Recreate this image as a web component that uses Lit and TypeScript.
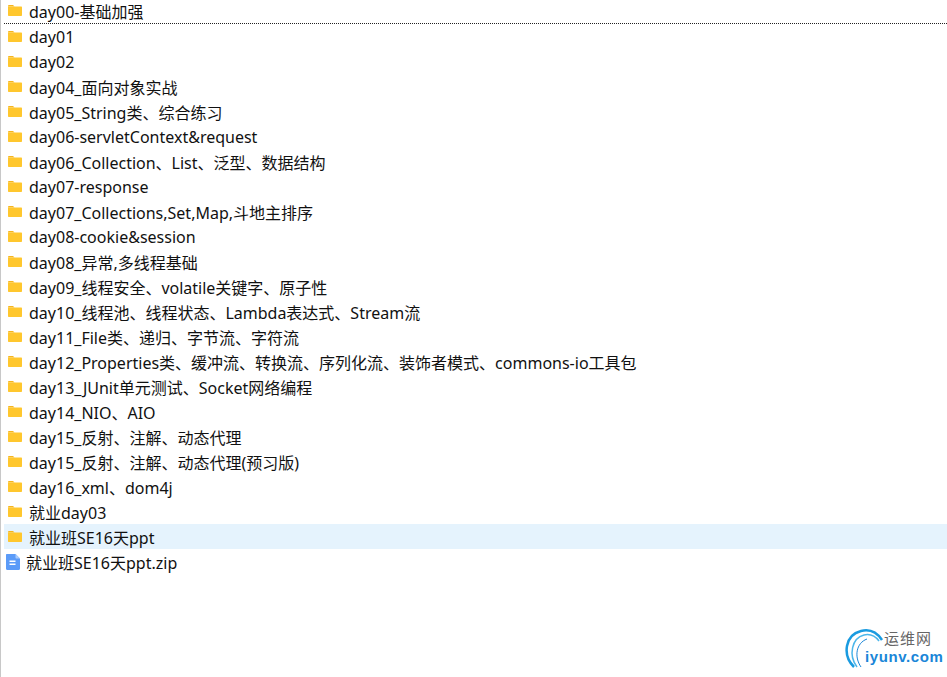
import { LitElement, html, css, svg } from "lit";
import { customElement } from "lit/decorators.js";

const NAMES = [
  "day00-基础加强","day01","day02","day04_面向对象实战","day05_String类、综合练习",
  "day06-servletContext&request","day06_Collection、List、泛型、数据结构","day07-response",
  "day07_Collections,Set,Map,斗地主排序","day08-cookie&session","day08_异常,多线程基础",
  "day09_线程安全、volatile关键字、原子性","day10_线程池、线程状态、Lambda表达式、Stream流",
  "day11_File类、递归、字节流、字符流","day12_Properties类、缓冲流、转换流、序列化流、装饰者模式、commons-io工具包",
  "day13_JUnit单元测试、Socket网络编程","day14_NIO、AIO","day15_反射、注解、动态代理",
  "day15_反射、注解、动态代理(预习版)","day16_xml、dom4j","就业day03","就业班SE16天ppt",
];

const folder = svg`<svg class="icon" width="16" height="16" viewBox="0 0 16 16">
  <path d="M1 3.2C1 2.5 1.5 2 2.2 2H6l1.6 1.6H1z" fill="#f5b51e"/>
  <path d="M1 3.5H14C14.6 3.5 15 3.9 15 4.500V12C15 12.6 14.600 13 14 13H2C1.400 13 1 12.600 1 12z" fill="#ffc72e"/>
</svg>`;

const file = svg`<svg class="icon" width="16" height="18" viewBox="0 0 16 18">
  <path d="M2 1H10.500L15 5.500V15.500C15 16.300 14.500 17 13.600 17H2.400C1.500 17 1 16.300 1 15.500V2C1 1.400 1.400 1 2 1z" fill="#5b9bf8"/>
  <path d="M10.500 1L15 5.500H11.500C10.900 5.500 10.500 5.100 10.500 4.500z" fill="#a9cbfb"/>
  <rect x="4.500" y="7.500" width="6" height="1.500" fill="#fff"/>
  <rect x="4.500" y="10.500" width="6" height="1.500" fill="#fff"/>
</svg>`;

@customElement("app-root")
export class AppRoot extends LitElement {
  static styles = css`
    :host {
      display: block;
      height: 677px;
      overflow: hidden;
      background: #fff;
      border-left: 1px solid #c8c8c8;
      box-sizing: border-box;
      position: relative;
      font-family: "Noto Sans", "Noto Sans CJK SC", sans-serif;
      font-size: 16px;
      color: #111;
    }
    .list { margin-top: -1px; padding-left: 3px; }
    .row {
      height: 25px;
      display: flex;
      align-items: center;
      gap: 6px;
      padding-left: 3px;
      white-space: nowrap;
    }
    .row.first { border-bottom: 1px dotted #222; height: 24px; }
    .row.sel { background: #e5f3fd; }
    .row.zip { gap: 5px; padding-left: 1px; }
    .icon { flex: none; }
    .logo {
      position: absolute;
      right: 0;
      bottom: 4px;
      width: 104px;
      height: 46px;
    }
    .logo svg { position: absolute; left: 0; top: 0; }
    .cn {
      position: absolute; left: 41px; top: 1px;
      font-size: 15px; line-height: 20px; color: #666; letter-spacing: 1px;
    }
    .en {
      position: absolute; left: 22px; top: 21px;
      font-family: "Liberation Sans", sans-serif;
      font-size: 15px; font-weight: 700; line-height: 18px; color: #1a86d8; letter-spacing: 0.6px;
    }
  `;

  render() {
    return html`
      <div class="list">
        ${NAMES.map((n, i) => html`
          <div class="row ${i === 0 ? "first" : ""} ${i === 21 ? "sel" : ""}">${folder}<span>${n}</span></div>`)}
        <div class="row zip">${file}<span>就业班SE16天ppt.zip</span></div>
      </div>
      <div class="logo">
        <svg width="46" height="46" viewBox="0 0 46 46" fill="none">
          <path d="M11 40C-1 28 2 8 18 4C28 1.500 35 7 39 13" stroke="#1a9be0" stroke-width="2.500"/>
          <path d="M14 40C5 28 9 11 21 8C28 6.500 33 10 36 14" stroke="#4bb6ea" stroke-width="1.500"/>
          <path d="M18 40C11 30 13 16 24 12" stroke="#1a86d8" stroke-width="1"/>
        </svg>
        <span class="cn">运维网</span>
        <span class="en">iyunv.com</span>
      </div>
    `;
  }
}
